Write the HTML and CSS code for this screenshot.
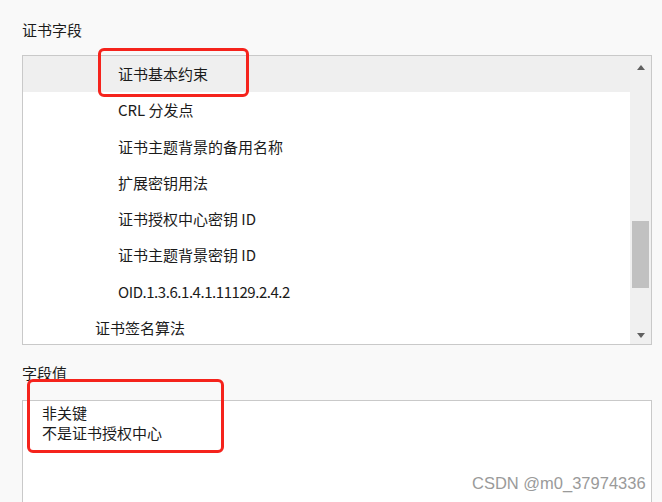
FILE: index.html
```html
<!DOCTYPE html>
<html>
<head>
  <meta charset="utf-8">
  <title>证书详细信息</title>
  <link rel="stylesheet" href="styles.css">
</head>
<body>
  <div class="section-label">证书字段</div>
  <div class="field-box">
    <ul class="field-list">
      <li class="field-item child selected">证书基本约束</li>
      <li class="field-item child">CRL 分发点</li>
      <li class="field-item child">证书主题背景的备用名称</li>
      <li class="field-item child">扩展密钥用法</li>
      <li class="field-item child">证书授权中心密钥 ID</li>
      <li class="field-item child">证书主题背景密钥 ID</li>
      <li class="field-item child oid">OID.1.3.6.1.4.1.11129.2.4.2</li>
      <li class="field-item">证书签名算法</li>
    </ul>
    <div class="scrollbar">
      <div class="arrow up"></div>
      <div class="track">
        <div class="thumb"></div>
      </div>
      <div class="arrow down"></div>
    </div>
  </div>

  <div class="section-label value-label">字段值</div>
  <div class="value-box">
    <div>非关键</div>
    <div>不是证书授权中心</div>
  </div>

  <!-- annotation marks -->
  <div class="mark mark-top"></div>
  <div class="mark mark-bottom"></div>
  <div class="watermark">CSDN @m0_37974336</div>
</body>
</html>
```

FILE: styles.css
```css
body {
  margin: 0;
  padding: 20px 10px 0 22px;
  height: 502px;
  box-sizing: border-box;
  overflow: hidden;
  background-color: #f9f9f9;
  font-family: "Noto Sans CJK SC", sans-serif;
  font-size: 15px;
  color: #1b1b1b;
  position: relative;
}

.section-label {
  line-height: 20px;
  height: 20px;
  margin-bottom: 15px;
}

.value-label {
  margin-top: 18px;
  margin-bottom: 17px;
}

.field-box {
  display: flex;
  height: 290px;
  box-sizing: border-box;
  border: 1px solid #c9c9c9;
  background-color: #fff;
  overflow: hidden;
}

.field-list {
  flex: 1;
  list-style: none;
  margin: 0;
  padding: 0;
  overflow: hidden;
}

.field-item {
  height: 36.3px;
  line-height: 36.3px;
  padding-left: 72px;
  white-space: nowrap;
}

.field-item.child {
  padding-left: 95px;
}

.field-item.oid {
  letter-spacing: -0.45px;
}

.field-item.selected {
  background-color: #efefef;
}

.scrollbar {
  width: 21px;
  background-color: #f0f0f0;
  display: flex;
  flex-direction: column;
}

.arrow {
  height: 22px;
  display: flex;
  align-items: center;
  justify-content: center;
}

.arrow::before {
  content: "";
  width: 0;
  height: 0;
  border-left: 4.5px solid transparent;
  border-right: 4.5px solid transparent;
}

.arrow.up::before {
  border-bottom: 5px solid #606060;
}

.arrow.down::before {
  border-top: 5px solid #606060;
  margin-top: 4px;
}

.track {
  flex: 1;
  padding: 0 2px;
}

.thumb {
  margin-top: 143px;
  height: 67px;
  background-color: #c1c1c1;
}

.value-box {
  height: 110px;
  box-sizing: border-box;
  border: 1px solid #c9c9c9;
  background-color: #fff;
  padding: 2px 19px;
  line-height: 19.5px;
}

.mark {
  position: absolute;
  border: 3px solid #f5231c;
  border-radius: 6px;
  box-sizing: border-box;
}

.mark-top {
  left: 98px;
  top: 48px;
  width: 151px;
  height: 49px;
}

.mark-bottom {
  left: 27px;
  top: 379px;
  width: 197px;
  height: 74px;
}

.watermark {
  position: absolute;
  left: 472px;
  top: 472px;
  font-family: "Liberation Sans", Arial, sans-serif;
  font-size: 16.5px;
  line-height: 22px;
  color: #9a9a9a;
  text-shadow: 0 0 1px #fff;
}
```
